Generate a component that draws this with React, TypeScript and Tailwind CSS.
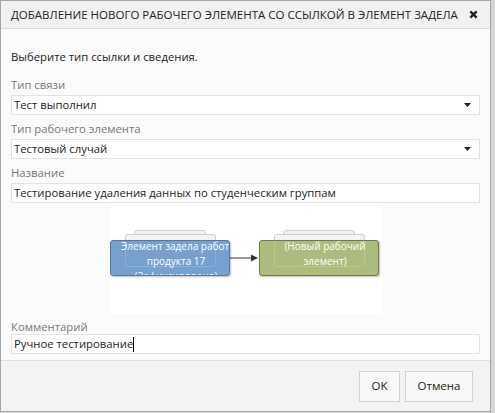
import React from "react";

const font = { fontFamily: '"Open Sans", "Noto Sans", "DejaVu Sans", sans-serif' };

function Caret() {
  return (
    <svg width="7" height="4" viewBox="0 0 7 4" className="shrink-0">
      <path d="M0 0 L7 0 L3.5 4 Z" fill="#222" />
    </svg>
  );
}

function Select({ value }: { value: string }) {
  return (
    <div className="flex items-center h-[20px] bg-white border border-[#e2e2e2] pl-[2px] pr-[8px]">
      <span className="flex-1 text-[11.3px] text-[#222] leading-none">{value}</span>
      <Caret />
    </div>
  );
}

function Label({ children }: { children: React.ReactNode }) {
  return <div className="text-[11.3px] text-[#777] leading-[12px]">{children}</div>;
}

function Node({
  x,
  color,
  border,
  lines,
}: {
  x: number;
  color: string;
  border: string;
  lines: string[];
}) {
  return (
    <>
      <div
        className="absolute rounded-[3px] border border-[#cfcfcf] bg-[#f1f1f1]"
        style={{ left: x + 24, top: 27, width: 72, height: 30 }}
      />
      <div
        className="absolute rounded-[3px] border border-[#cfcfcf] bg-[#f4f4f4]"
        style={{ left: x + 15, top: 31, width: 91, height: 32 }}
      />
      <div
        className="absolute rounded-[3px] overflow-hidden shadow-[1px_1px_2px_rgba(0,0,0,0.25)]"
        style={{
          left: x,
          top: 37,
          width: 120,
          height: 36,
          background: color,
          border: `1px solid ${border}`,
        }}
      >
        <div
          className="absolute rounded-[3px] border border-[rgba(255,255,255,0.18)]"
          style={{ left: 14, top: -7, width: 91, height: 33 }}
        />
        <div className="relative w-[120px] pl-[10px] -mt-[2px] text-center text-white text-[10px] leading-[15px]">
          {lines.map((l, i) => (
            <div key={i} className="whitespace-nowrap">
              {l}
            </div>
          ))}
        </div>
      </div>
    </>
  );
}

export default function App() {
  return (
    <div className="w-[495px] h-[413px] bg-[#d6d6d6] flex" style={font}>
      <div className="w-[491px] h-[412px] border border-[#a6a6a6] bg-[#fbfbfb] flex flex-col">
        <div className="h-[28px] bg-[#f1f1f1] border-b border-[#dcdcdc] flex items-center pl-[10px] pr-[12px] shrink-0">
          <div className="flex-1 whitespace-nowrap text-[11.5px] text-[#222] leading-none">
            ДОБАВЛЕНИЕ НОВОГО РАБОЧЕГО ЭЛЕМЕНТА СО ССЫЛКОЙ В ЭЛЕМЕНТ ЗАДЕЛА
          </div>
          <svg width="9" height="9" viewBox="0 0 10 10" className="shrink-0">
            <path d="M1.5 1.5 L8.5 8.5 M8.5 1.5 L1.5 8.5" stroke="#222" strokeWidth="2.6" />
          </svg>
        </div>
        <div className="flex-1 flex flex-col px-[10px]">
          <div className="text-[11.3px] text-[#222] leading-[12px] mt-[22px]">Выберите тип ссылки и сведения.</div>
          <div className="mt-[16px]">
            <Label>Тип связи</Label>
          </div>
          <div className="mt-[4px]">
            <Select value="Тест выполнил" />
          </div>
          <div className="mt-[8px]">
            <Label>Тип рабочего элемента</Label>
          </div>
          <div className="mt-[4px]">
            <Select value="Тестовый случай" />
          </div>
          <div className="mt-[8px]">
            <Label>Название</Label>
          </div>
          <div className="mt-[4px] h-[20px] bg-white border border-[#e2e2e2] flex items-center pl-[2px] text-[11.3px] text-[#222] leading-none">
            Тестирование удаления данных по студенческим группам
          </div>
          <div className="mx-auto w-[273px] h-[111px] bg-white relative">
            <Node
              x={1}
              color="rgba(106,152,202,0.92)"
              border="#4b79a9"
              lines={["Элемент задела работы", "продукта 17", "(Зафиксировано)"]}
            />
            <svg className="absolute" style={{ left: 121, top: 50 }} width="30" height="10" viewBox="0 0 30 10">
              <path d="M0 5 L24 5" stroke="#333" strokeWidth="1" />
              <path d="M21 1.5 L28 5 L21 8.5 Z" fill="#333" />
            </svg>
            <Node
              x={150}
              color="rgba(166,184,117,0.95)"
              border="#6c7d3c"
              lines={["(Новый рабочий", "элемент)"]}
            />
          </div>
          <div className="mt-[7px]">
            <Label>Комментарий</Label>
          </div>
          <div className="mt-[1px] h-[20px] bg-white border border-[#e2e2e2] flex items-center pl-[2px] text-[11.3px] text-[#222] leading-none">
            Ручное тестирование<span className="inline-block w-[1px] h-[15px] bg-black" />
          </div>
        </div>
        <div className="h-[51px] bg-[#f3f3f3] border-t border-[#dedede] flex items-center justify-end gap-[5px] pr-[17px] shrink-0">
          <button className="h-[31px] w-[41px] border border-[#d2d2d2] bg-[#f8f8f8] text-[11.5px] text-[#222]">OK</button>
          <button className="h-[31px] w-[68px] border border-[#d2d2d2] bg-[#f8f8f8] text-[11.5px] text-[#222]">Отмена</button>
        </div>
      </div>
    </div>
  );
}
